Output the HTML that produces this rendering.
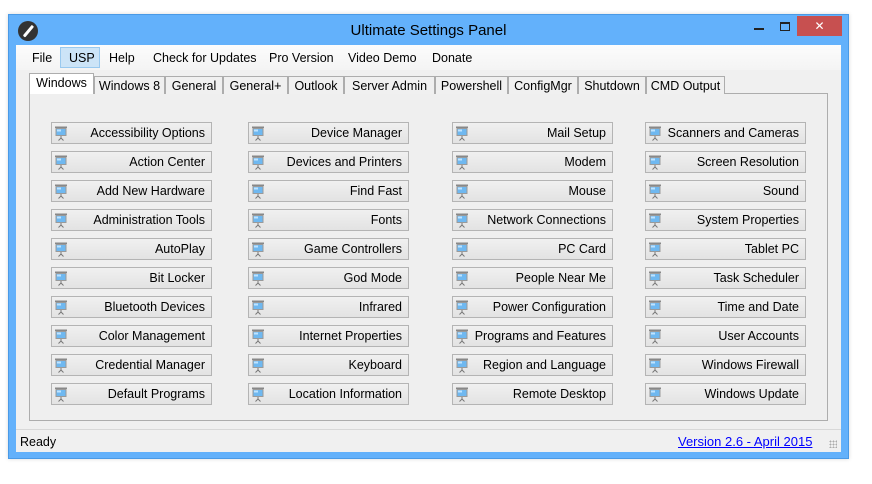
<!DOCTYPE html>
<html><head><meta charset="utf-8"><style>
*{margin:0;padding:0;box-sizing:border-box}
body{width:872px;height:484px;background:#fff;position:relative;overflow:hidden;font-family:"Liberation Sans","DejaVu Sans",sans-serif;font-size:12.5px;color:#000}
.win{position:absolute;left:8px;top:14px;width:841px;height:445px;background:#63b1fb;border:1px solid #4a9ae6;box-shadow:0 0 4px rgba(0,0,0,.15)}
.title{position:absolute;left:0;top:7px;width:100%;text-align:center;font-size:15px;color:#000}
.logo{position:absolute;left:9px;top:6px;width:20px;height:20px;border-radius:50%;background:#333}
.logo:after{content:"";position:absolute;left:9px;top:3px;width:2.5px;height:14px;background:#fff;transform:rotate(40deg);border-radius:1px}
.client{position:absolute;left:7px;top:31px;width:825px;height:407px;background:#f0f0f0}
.menu{position:absolute;left:0;top:0;width:100%;height:25px;background:linear-gradient(#fcfcfc,#f4f4f4)}
.mi{position:absolute;top:6px}
.usp{position:absolute;left:44px;top:2px;width:40px;height:21px;background:#cce4f7;border:1px solid #99c9ef}
.tab{position:absolute;top:76px;height:18px;border:1px solid #adadad;border-bottom:none;background:#f0f0f0;text-align:center;line-height:18px}
.tab.sel{top:73px;height:21px;background:#fff;line-height:19px;z-index:2}
.panel{position:absolute;left:29px;top:93px;width:799px;height:328px;border:1px solid #adadad;background:#efefef}
.btn{position:absolute;width:161px;height:22px;border:1px solid #b4b4b4;background:linear-gradient(#f0f0f0,#e3e3e3);text-align:right;padding-right:6px;line-height:21px;white-space:nowrap}
.ic{position:absolute;left:2px;top:3px;width:14px;height:15px}
.status{position:absolute;left:16px;top:429px;width:825px;border-top:1px solid #d8d8d8}
</style></head><body>
<div class="win">
<div class="logo"></div>
<div class="title">Ultimate Settings Panel</div>
<div style="position:absolute;left:745px;top:13px;width:10px;height:2px;background:#222"></div>
<div style="position:absolute;left:771px;top:7px;width:10px;height:9px;border:1px solid #222;border-top-width:2px"></div>
<div style="position:absolute;left:788px;top:1px;width:45px;height:20px;background:#c75050;color:#fff;text-align:center;font-size:12px;line-height:20px">✕</div>
</div>
<div class="client" style="left:16px;top:45px">
<div class="menu">
<div class="usp"></div>
<span class="mi" style="left:16px">File</span>
<span class="mi" style="left:53px">USP</span>
<span class="mi" style="left:93px">Help</span>
<span class="mi" style="left:137px">Check for Updates</span>
<span class="mi" style="left:253px">Pro Version</span>
<span class="mi" style="left:332px">Video Demo</span>
<span class="mi" style="left:416px">Donate</span>
</div>
</div>
<div class="panel"></div>
<div class="tab sel" style="left:29px;width:65px">Windows</div>
<div class="tab" style="left:94px;width:71px">Windows 8</div>
<div class="tab" style="left:165px;width:58px">General</div>
<div class="tab" style="left:223px;width:65px">General+</div>
<div class="tab" style="left:288px;width:56px">Outlook</div>
<div class="tab" style="left:344px;width:91px">Server Admin</div>
<div class="tab" style="left:435px;width:73px">Powershell</div>
<div class="tab" style="left:508px;width:70px">ConfigMgr</div>
<div class="tab" style="left:578px;width:68px">Shutdown</div>
<div class="tab" style="left:646px;width:79px">CMD Output</div>
<svg width="0" height="0" style="position:absolute"><defs><symbol id="i" viewBox="0 0 14 15"><rect x="1" y="0.5" width="12" height="1.5" fill="#888"/><rect x="1.5" y="2" width="11" height="8" fill="#9a9a9a"/><rect x="2.5" y="3" width="9" height="6" fill="#6fb8f0"/><rect x="3" y="3.5" width="4" height="2" fill="#bfe3ff"/><path d="M7 10v2M7 12l-2.5 2.5M7 12l2.5 2.5" stroke="#777" stroke-width="1" fill="none"/></symbol></defs></svg>
<div id="b"></div>
<div class="status"></div>
<div style="position:absolute;left:20px;top:435px">Ready</div>
<div style="position:absolute;left:678px;top:434px;color:#00f;text-decoration:underline;font-size:13px">Version 2.6 - April 2015</div>
<div style="position:absolute;left:829px;top:440px;width:8px;height:8px;background:radial-gradient(circle,#aaa 0.8px,transparent 1px) 0 0/3px 3px"></div>
<script>
var cols=[[51,["Accessibility Options","Action Center","Add New Hardware","Administration Tools","AutoPlay","Bit Locker","Bluetooth Devices","Color Management","Credential Manager","Default Programs"]],
[248,["Device Manager","Devices and Printers","Find Fast","Fonts","Game Controllers","God Mode","Infrared","Internet Properties","Keyboard","Location Information"]],
[452,["Mail Setup","Modem","Mouse","Network Connections","PC Card","People Near Me","Power Configuration","Programs and Features","Region and Language","Remote Desktop"]],
[645,["Scanners and Cameras","Screen Resolution","Sound","System Properties","Tablet PC","Task Scheduler","Time and Date","User Accounts","Windows Firewall","Windows Update"]]];
var h="";cols.forEach(function(c){c[1].forEach(function(t,i){h+='<div class="btn" style="left:'+c[0]+'px;top:'+(122+i*29)+'px"><svg class="ic"><use href="#i"/></svg>'+t+'</div>';});});
document.getElementById("b").innerHTML=h;
</script>
</body></html>
